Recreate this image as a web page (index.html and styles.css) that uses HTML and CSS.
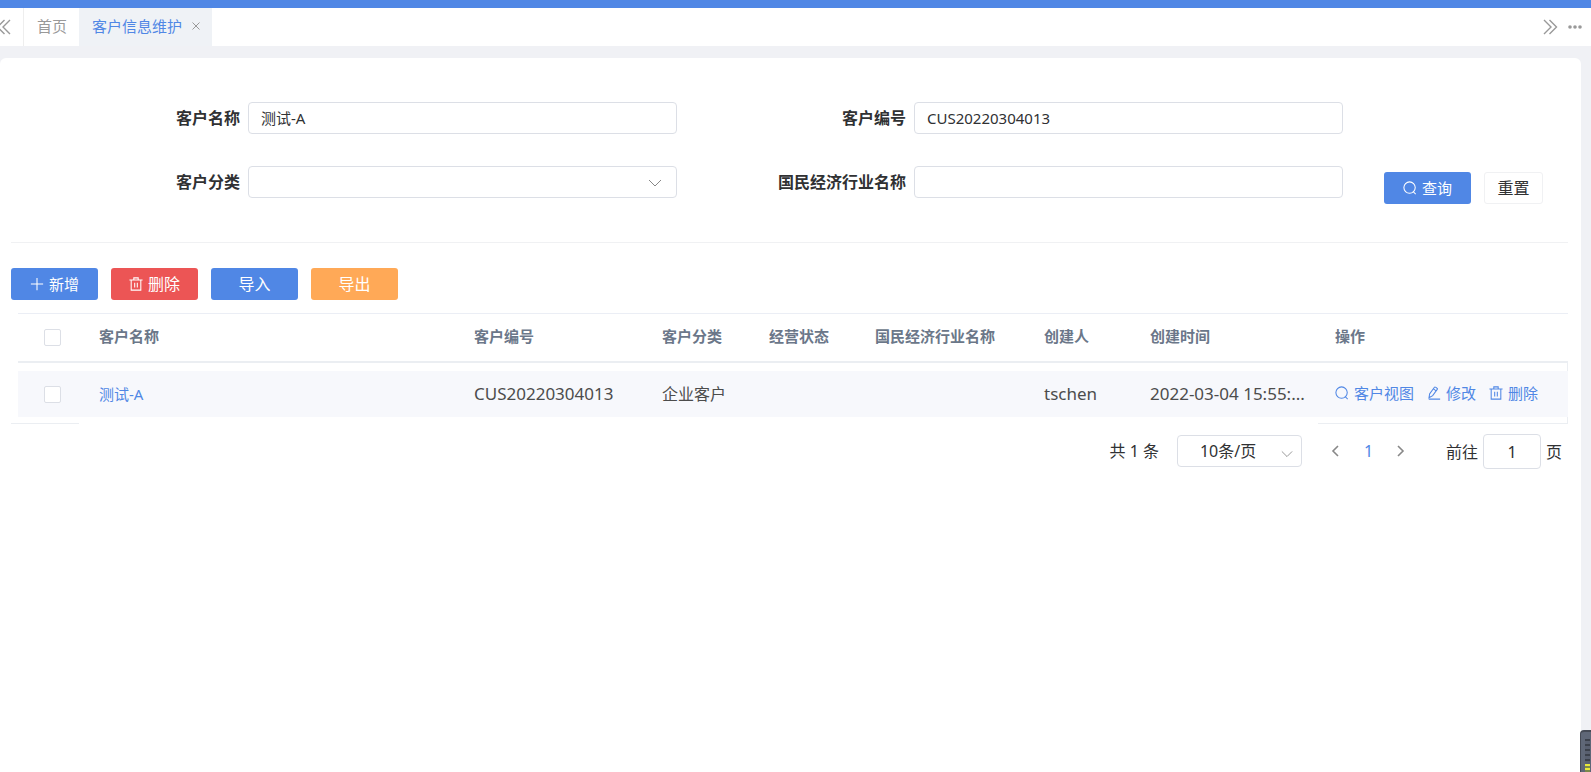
FILE: index.html
```html
<!DOCTYPE html>
<html lang="zh-CN">
<head>
<meta charset="utf-8">
<title>客户信息维护</title>
<link rel="stylesheet" href="styles.css">
</head>
<body>
<svg class="sprite" aria-hidden="true">
  <symbol id="i-search" viewBox="0 0 16 16"><circle cx="7.5" cy="7.5" r="6.5"/><path d="M11.500 12 14.500 15"/></symbol>
  <symbol id="i-trash" viewBox="0 0 16 16"><path d="M.5 3.500h15M5.500 3.500v-2.500h5v2.500M2.500 3.500v11.500h11v-11.500M6.500 6.500v5.500M9.500 6.500v5.500"/></symbol>
  <symbol id="i-edit" viewBox="0 0 16 16"><path d="M3 9 8.500 1.500q.5-.7 1.200-.2l1.800 1.200q.8.500.2 1.300L6.500 11 2.300 13.500zM7.300 3.300l3.200 2.200M2 15h13"/></symbol>
  <symbol id="i-plus" viewBox="0 0 16 16"><path d="M8 1v14M1 8h14"/></symbol>
  <symbol id="i-dleft" viewBox="0 0 16 16"><path d="M8.500 1 1.500 8l7 7M14 1 7 8l7 7"/></symbol>
  <symbol id="i-dright" viewBox="0 0 16 16"><path d="M2 1l7 7-7 7M7.500 1l7 7-7 7"/></symbol>
</svg>
<div class="topbar"></div>
<nav class="tabs">
  <button class="tabs-prev" type="button" aria-label="向左"><svg class="icon"><use href="#i-dleft"/></svg></button>
  <a class="tab" href="#home">首页</a>
  <a class="tab tab-active" href="#customer">客户信息维护<svg class="close" viewBox="0 0 8 8"><path d="M.5.5l7 7M7.500.5l-7 7"/></svg></a>
  <div class="tabs-tools">
    <button type="button" aria-label="向右"><svg class="icon"><use href="#i-dright"/></svg></button>
    <button type="button" aria-label="更多"><svg class="dots" viewBox="0 0 14 4"><circle cx="2" cy="2" r="1.8"/><circle cx="7" cy="2" r="1.8"/><circle cx="12" cy="2" r="1.8"/></svg></button>
  </div>
</nav>
<main class="card">
  <form class="search">
    <div class="field"><label for="name">客户名称</label><input id="name" type="text" value="测试-A"></div>
    <div class="field"><label for="code">客户编号</label><input id="code" type="text" value="CUS20220304013"></div>
    <div class="field field-second"><label for="type">客户分类</label>
      <div class="select"><select id="type"><option></option></select><svg class="arrow" viewBox="0 0 14 8"><path d="M1 1l6 6 6-6"/></svg></div></div>
    <div class="field"><label for="industry">国民经济行业名称</label><input id="industry" type="text"></div>
    <div class="search-actions">
      <button class="btn btn-primary btn-icon" type="button"><svg class="icon"><use href="#i-search"/></svg>查询</button>
      <button class="btn btn-plain" type="reset">重置</button>
    </div>
  </form>
  <div class="toolbar">
    <button class="btn btn-primary btn-icon" type="button"><svg class="icon"><use href="#i-plus"/></svg>新增</button>
    <button class="btn btn-danger" type="button"><svg class="icon"><use href="#i-trash"/></svg>删除</button>
    <button class="btn btn-primary" type="button">导入</button>
    <button class="btn btn-warning" type="button">导出</button>
  </div>
  <table class="grid">
    <colgroup><col class="c-check"><col><col class="c-code"><col class="c-type"><col class="c-small"><col class="c-industry"><col class="c-small"><col class="c-time"><col class="c-ops"></colgroup>
    <thead>
      <tr><th><input type="checkbox" aria-label="全选"></th><th>客户名称</th><th>客户编号</th><th>客户分类</th><th>经营状态</th><th>国民经济行业名称</th><th>创建人</th><th>创建时间</th><th>操作</th></tr>
    </thead>
    <tbody>
      <tr><td><input type="checkbox" aria-label="选择 测试-A"></td><td><a href="#view">测试-A</a></td><td class="latin">CUS20220304013</td><td>企业客户</td><td></td><td></td><td class="latin">tschen</td><td class="latin">2022-03-04 15:55:...</td>
        <td><div class="ops"><a href="#view"><svg class="icon"><use href="#i-search"/></svg>客户视图</a><a href="#edit"><svg class="icon"><use href="#i-edit"/></svg>修改</a><a href="#delete"><svg class="icon"><use href="#i-trash"/></svg>删除</a></div></td></tr>
    </tbody>
  </table>
  <div class="table-end"><span class="end-left"></span><span class="end-right"></span></div>
  <div class="pager">
    <span class="total">共 1 条</span>
    <div class="select size"><select aria-label="每页条数"><option>10条/页</option></select><svg class="arrow" viewBox="0 0 14 8"><path d="M1 1l6 6 6-6"/></svg></div>
    <div class="pages">
      <button type="button" aria-label="上一页"><svg class="chev" viewBox="0 0 8 12"><path d="M7 1 2 6l5 5"/></svg></button>
      <button class="current" type="button">1</button>
      <button type="button" aria-label="下一页"><svg class="chev" viewBox="0 0 8 12"><path d="M1 1l5 5-5 5"/></svg></button>
    </div>
    <label class="jump">前往<input type="text" value="1">页</label>
  </div>
</main>
<div class="meter"><div class="bars"></div><div class="bars bars-on"></div></div>
</body>
</html>
```

FILE: styles.css
```css
* { box-sizing: border-box; }
body {
  margin: 0;
  min-height: 100vh;
  display: flex;
  flex-direction: column;
  background: #f0f1f5;
  color: #303133;
  font-family: "Noto Sans", "Noto Sans CJK SC", sans-serif;
  font-size: 16px;
  line-height: 24px;
}
button, input, select { font: inherit; color: inherit; }
button { cursor: pointer; }
a { color: #5087e5; text-decoration: none; }
svg { fill: none; stroke: currentColor; flex: none; }
.sprite { position: absolute; width: 0; height: 0; }
.icon { width: 14px; height: 14px; stroke-width: 1.2; }

.topbar { height: 8px; background: #5087e5; }
.tabs { display: flex; height: 38px; background: #fff; font-size: 15px; color: #999; }
.tabs button { border: 0; padding: 0; background: none; color: #999; display: flex; align-items: center; }
.tabs .tabs-prev { width: 24px; border-right: 1px solid #eee; }
.tabs-prev .icon { margin-left: -4px; }
.tabs .icon { width: 16px; height: 16px; stroke-width: 1.4; }
.tab { display: flex; align-items: center; padding: 0 12px 2px 13px; color: #999; }
.tab-active { background: #eff2f6; color: #5087e5; gap: 10px; }
.close { width: 8px; height: 8px; color: #999; }
.tabs-tools { display: flex; gap: 10px; margin-left: auto; padding-right: 9px; }
.tabs .dots { width: 14px; height: 4px; fill: currentColor; stroke: none; }

.card {
  flex: 1;
  margin: 12px 10px 0 0;
  padding: 44px 13px 0 11px;
  background: #fff;
  border-radius: 6px 6px 0 0;
}
.search {
  display: grid;
  grid-template-columns: 666fr 666fr 225fr;
  row-gap: 32px;
  padding-bottom: 44px;
  border-bottom: 1px solid #f0f1f3;
}
.field { display: flex; align-items: center; gap: 8px; height: 32px; }
.field label { width: 229px; text-align: right; font-weight: 600; font-size: 16px; color: #303133; }
.field input, .select { flex: 1; min-width: 0; height: 32px; border: 1px solid #dcdfe6; border-radius: 4px; background: #fff; }
.field input { padding: 0 12px 1px; font-size: 15px; }
.field-second { grid-column: 1; }
.select { position: relative; }
.select select { width: 100%; height: 100%; border: 0; padding: 0 12px; appearance: none; background: none; }
.select .arrow { position: absolute; right: 14px; top: 12px; width: 14px; height: 8px; color: #888; pointer-events: none; }
.search-actions { display: flex; gap: 13px; padding-left: 41px; margin-top: 6px; height: 32px; margin-bottom: -6px; }
.btn { display: flex; align-items: center; justify-content: center; gap: 5px; width: 87px; height: 32px; padding: 0; border: 0; border-radius: 3px; color: #fff; }
.btn-icon { font-size: 15px; }
.btn-primary { background: #5087e5; }
.btn-danger { background: #ec5555; }
.btn-warning { background: #ffa957; }
.btn-plain { width: 59px; background: #fff; color: #303133; border: 1px solid #f0f1f3; }
.toolbar { display: flex; gap: 13px; margin: 25px 0 13px; }

.grid { width: calc(100% - 7px); margin-left: 7px; table-layout: fixed; border-collapse: separate; border-spacing: 0; }
.c-check { width: 71px; }
.c-code { width: 188px; }
.c-type { width: 107px; }
.c-small { width: 106px; }
.c-industry { width: 169px; }
.c-time { width: 185px; }
.c-ops { width: 243px; }
.grid th, .grid td { text-align: left; padding: 0 10px; white-space: nowrap; }
.grid th { height: 50px; padding-bottom: 3px; border-top: 1px solid #ebeef5; border-bottom: 2px solid #ebeef2; font-size: 15px; font-weight: 600; color: #6b7789; }
.grid th:first-child { padding-bottom: 0; }
.grid td { height: 60px; padding: 8px 10px 6px; color: #4c4c4c; background: linear-gradient(#f7f8fc, #f7f8fc) 0 8px / 100% 46px no-repeat; }
.grid td:last-child { padding-bottom: 8px; background: linear-gradient(#f7f8fc, #f7f8fc) 0 8px / 100% 46px no-repeat, linear-gradient(#ebeef2, #ebeef2) 100% 0 / 1px 100% no-repeat; }
.grid td.latin { font-size: 17px; }
.grid td a { font-size: 15px; }
.grid th:first-child, .grid td:first-child { padding-left: 26px; }
.grid input { display: block; appearance: none; width: 17px; height: 17px; margin: 0; border: 1px solid #dcdfe6; border-radius: 2px; background: #fff; }
.ops { display: flex; gap: 13px; }
.ops a { display: flex; align-items: center; gap: 5px; }
.table-end { display: flex; justify-content: space-between; height: 1px; }
.table-end span { background: #ebeef2; }
.end-left { width: 68px; }
.end-right { width: 250px; }

.pager { display: flex; align-items: center; justify-content: flex-end; padding: 10px 6px 0 0; }
.total, .size, .pages { margin-bottom: 2px; }
.size { flex: none; width: 125px; margin-left: 18px; margin-right: 17px; }
.size select { padding: 0 20px 0 22px; }
.size .arrow { right: 8px; top: 14px; width: 12px; }
.pages { display: flex; }
.pages button { display: flex; align-items: center; justify-content: center; width: 33px; height: 32px; padding: 0; border: 0; background: none; color: #888; }
.pages .current { color: #5087e5; }
.chev { width: 8px; height: 12px; stroke-width: 1.6; }
.jump { display: flex; align-items: center; margin-left: 28px; }
.jump input { width: 58px; height: 35px; margin: 0 5px; padding: 0; text-align: center; border: 1px solid #dcdfe6; border-radius: 4px; }

.meter { position: fixed; right: 0; bottom: 0; width: 11px; height: 42px; padding: 7px 1px 0 4px; background: #5f6777; border: solid #454a55; border-width: 2px 0 0 1px; border-top-left-radius: 4px; }
.bars { height: 25px; background: repeating-linear-gradient(#3c414b 0 2px, #596070 2px 5px); }
.bars-on { height: 8px; background: repeating-linear-gradient(#e8e83a 0 2px, #7c8a4c 2px 4px); }
```
